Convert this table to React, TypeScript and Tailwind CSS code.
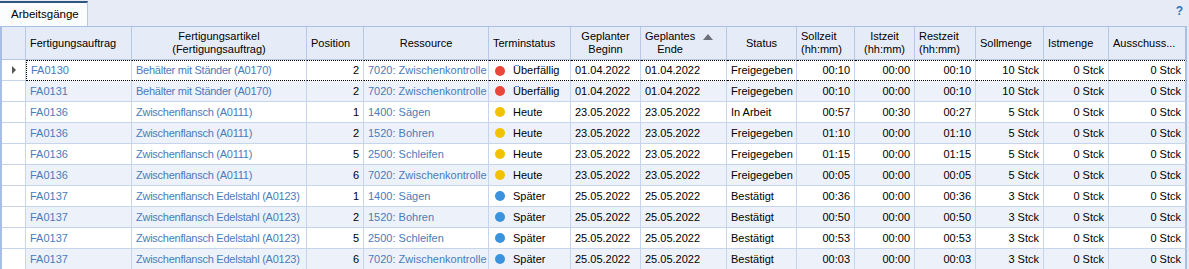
import React from "react";

type Tone = "red" | "yellow" | "blue";

type Row = {
  auftrag: string;
  artikel: string;
  pos: number;
  ressource: string;
  tone: Tone;
  termin: string;
  beginn: string;
  ende: string;
  status: string;
  soll: string;
  ist: string;
  rest: string;
  sollMenge: string;
};

const rows: Row[] = [
  { auftrag: "FA0130", artikel: "Behälter mit Ständer (A0170)", pos: 2, ressource: "7020: Zwischenkontrolle", tone: "red", termin: "Überfällig", beginn: "01.04.2022", ende: "01.04.2022", status: "Freigegeben", soll: "00:10", ist: "00:00", rest: "00:10", sollMenge: "10 Stck" },
  { auftrag: "FA0131", artikel: "Behälter mit Ständer (A0170)", pos: 2, ressource: "7020: Zwischenkontrolle", tone: "red", termin: "Überfällig", beginn: "01.04.2022", ende: "01.04.2022", status: "Freigegeben", soll: "00:10", ist: "00:00", rest: "00:10", sollMenge: "10 Stck" },
  { auftrag: "FA0136", artikel: "Zwischenflansch (A0111)", pos: 1, ressource: "1400: Sägen", tone: "yellow", termin: "Heute", beginn: "23.05.2022", ende: "23.05.2022", status: "In Arbeit", soll: "00:57", ist: "00:30", rest: "00:27", sollMenge: "5 Stck" },
  { auftrag: "FA0136", artikel: "Zwischenflansch (A0111)", pos: 2, ressource: "1520: Bohren", tone: "yellow", termin: "Heute", beginn: "23.05.2022", ende: "23.05.2022", status: "Freigegeben", soll: "01:10", ist: "00:00", rest: "01:10", sollMenge: "5 Stck" },
  { auftrag: "FA0136", artikel: "Zwischenflansch (A0111)", pos: 5, ressource: "2500: Schleifen", tone: "yellow", termin: "Heute", beginn: "23.05.2022", ende: "23.05.2022", status: "Freigegeben", soll: "01:15", ist: "00:00", rest: "01:15", sollMenge: "5 Stck" },
  { auftrag: "FA0136", artikel: "Zwischenflansch (A0111)", pos: 6, ressource: "7020: Zwischenkontrolle", tone: "yellow", termin: "Heute", beginn: "23.05.2022", ende: "23.05.2022", status: "Freigegeben", soll: "00:05", ist: "00:00", rest: "00:05", sollMenge: "5 Stck" },
  { auftrag: "FA0137", artikel: "Zwischenflansch Edelstahl (A0123)", pos: 1, ressource: "1400: Sägen", tone: "blue", termin: "Später", beginn: "25.05.2022", ende: "25.05.2022", status: "Bestätigt", soll: "00:36", ist: "00:00", rest: "00:36", sollMenge: "3 Stck" },
  { auftrag: "FA0137", artikel: "Zwischenflansch Edelstahl (A0123)", pos: 2, ressource: "1520: Bohren", tone: "blue", termin: "Später", beginn: "25.05.2022", ende: "25.05.2022", status: "Bestätigt", soll: "00:50", ist: "00:00", rest: "00:50", sollMenge: "3 Stck" },
  { auftrag: "FA0137", artikel: "Zwischenflansch Edelstahl (A0123)", pos: 5, ressource: "2500: Schleifen", tone: "blue", termin: "Später", beginn: "25.05.2022", ende: "25.05.2022", status: "Bestätigt", soll: "00:53", ist: "00:00", rest: "00:53", sollMenge: "3 Stck" },
  { auftrag: "FA0137", artikel: "Zwischenflansch Edelstahl (A0123)", pos: 6, ressource: "7020: Zwischenkontrolle", tone: "blue", termin: "Später", beginn: "25.05.2022", ende: "25.05.2022", status: "Bestätigt", soll: "00:03", ist: "00:00", rest: "00:03", sollMenge: "3 Stck" },
];

const dotClass: Record<Tone, string> = {
  red: "bg-[#e8473a]",
  yellow: "bg-[#f2c200]",
  blue: "bg-[#3a93dc]",
};

const widths = [24, 106, 175, 57, 125, 82, 70, 86, 70, 58, 60, 61, 68, 65, 78];

const th = "border-r border-b border-[#b7c8e6] px-1 font-normal leading-[13px] text-black";

export default function App() {
  return (
    <div className="h-[269px] w-[1189px] overflow-hidden bg-[#e6ebf6] font-['Liberation_Sans',Arial,sans-serif] text-[11px] text-black">
      <div className="flex h-[26px] items-end justify-between">
        <div className="flex h-[25px] w-[88px] items-center border-t-2 border-r border-t-[#30557f] border-r-[#b7c8e6] bg-[#fbfcfe] pl-[11px] text-[11.5px]">
          Arbeitsgänge
        </div>
        <div className="mb-[6px] mr-[6px] text-[12px] font-bold text-[#2f73c0]">?</div>
      </div>
      <table
        className="table-fixed border-separate border-spacing-0 border-l-2 border-t border-[#a9bee3]"
        style={{ width: 1185 }}
      >
        <colgroup>
          {widths.map((w, i) => (
            <col key={i} style={{ width: w }} />
          ))}
        </colgroup>
        <thead>
          <tr className="h-[33px] bg-[#e6ecf7]">
            <th className={th}></th>
            <th className={`${th} text-left`}>Fertigungsauftrag</th>
            <th className={`${th} text-center`}>
              Fertigungsartikel
              <br />
              (Fertigungsauftrag)
            </th>
            <th className={`${th} text-left`}>Position</th>
            <th className={`${th} text-center`}>Ressource</th>
            <th className={`${th} text-left`}>Terminstatus</th>
            <th className={`${th} text-center`}>
              Geplanter
              <br />
              Beginn
            </th>
            <th className={`${th} text-left`}>
              <div className="flex items-start">
                <div className="text-center">
                  Geplantes
                  <br />
                  Ende
                </div>
                <svg width="10" height="6" viewBox="0 0 10 6" className="ml-[8px] mt-[4px]">
                  <polygon points="5,0 10,6 0,6" fill="#6b6f78" />
                </svg>
              </div>
            </th>
            <th className={`${th} text-center`}>Status</th>
            <th className={`${th} text-left`}>
              Sollzeit
              <br />
              (hh:mm)
            </th>
            <th className={`${th} text-center`}>
              Istzeit
              <br />
              (hh:mm)
            </th>
            <th className={`${th} text-left`}>
              Restzeit
              <br />
              (hh:mm)
            </th>
            <th className={`${th} text-left`}>Sollmenge</th>
            <th className={`${th} text-left`}>Istmenge</th>
            <th className={`${th} text-left border-r-2 border-r-[#a9bee3]`}>Ausschuss...</th>
          </tr>
        </thead>
        <tbody>
          {rows.map((r, i) => {
            const focus = i === 0;
            const td = `h-[21px] px-1 whitespace-nowrap overflow-hidden border-r border-b border-[#c6d4ec] ${
              i % 2 === 0 ? "bg-white" : "bg-[#edf2fa]"
            } ${
              focus
                ? "border-b-black [border-bottom-style:dotted] border-t border-t-black [border-top-style:dotted]"
                : ""
            }`;
            return (
              <tr key={i}>
                <td className="h-[21px] border-r border-b border-[#c6d4ec] bg-white p-0">
                  {focus && (
                    <svg width="24" height="8" viewBox="0 0 24 8" className="block">
                      <polygon points="10,0 14,4 10,8" fill="#555" />
                    </svg>
                  )}
                </td>
                <td className={`${td} text-[#4a7bbb] ${focus ? "border-l border-l-black [border-left-style:dotted]" : ""}`}>
                  {r.auftrag}
                </td>
                <td className={`${td} text-[#4a7bbb] tracking-[-0.25px]`}>{r.artikel}</td>
                <td className={`${td} text-right`}>{r.pos}</td>
                <td className={`${td} text-[#4a7bbb]`}>{r.ressource}</td>
                <td className={td}>
                  <div className="flex items-center gap-[8px] pl-[2px]">
                    <span className={`h-[10px] w-[10px] rounded-full ${dotClass[r.tone]}`} />
                    <span>{r.termin}</span>
                  </div>
                </td>
                <td className={td}>{r.beginn}</td>
                <td className={td}>{r.ende}</td>
                <td className={td}>{r.status}</td>
                <td className={`${td} text-right`}>{r.soll}</td>
                <td className={`${td} text-right`}>{r.ist}</td>
                <td className={`${td} text-right`}>{r.rest}</td>
                <td className={`${td} text-right`}>{r.sollMenge}</td>
                <td className={`${td} text-right`}>0 Stck</td>
                <td className={`${td} text-right border-r-2 border-r-[#a9bee3]`}>0 Stck</td>
              </tr>
            );
          })}
        </tbody>
      </table>
    </div>
  );
}
